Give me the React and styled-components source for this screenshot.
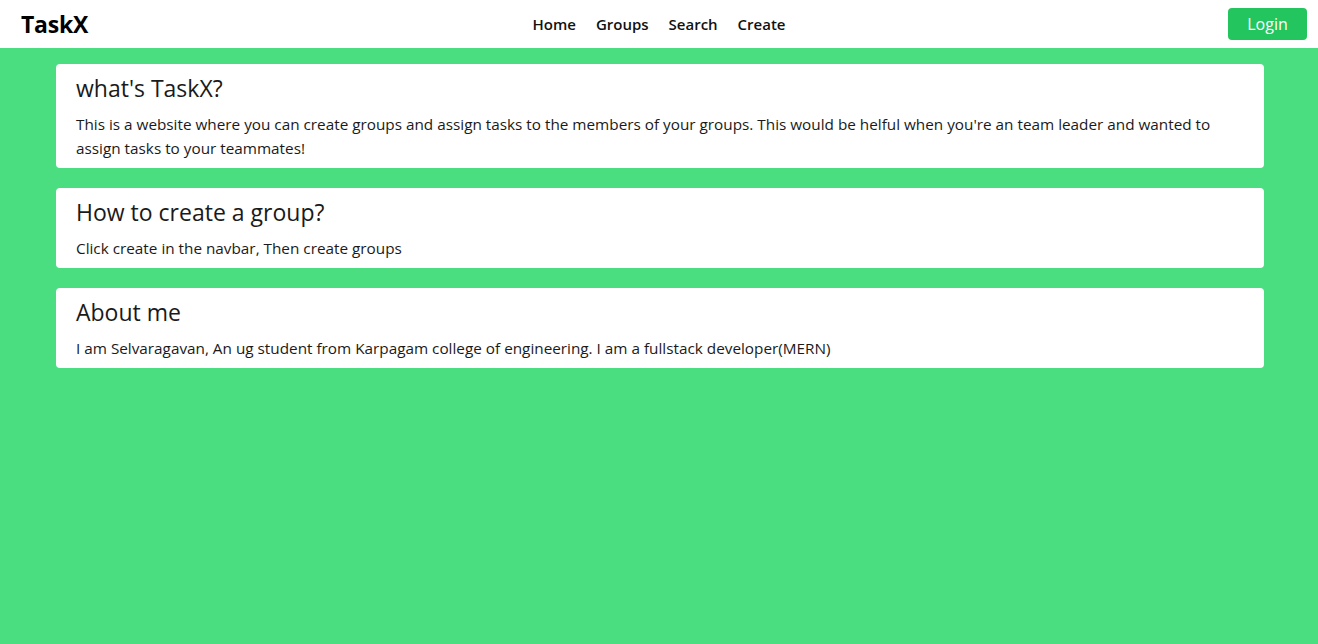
import React from "react";
import styled, { createGlobalStyle } from "styled-components";

const GlobalStyle = createGlobalStyle`
  html, body {
    margin: 0;
    padding: 0;
    height: 100%;
    background: #ffffff;
  }
  body {
    font-family: "Open Sans", "Noto Sans", sans-serif;
    color: #1a1a1a;
  }
  #root {
    height: 100%;
  }
  * {
    box-sizing: border-box;
  }
`;

const Page = styled.div`
  min-height: 100vh;
  background: #4ade80;
  display: flex;
  flex-direction: column;
`;

const Navbar = styled.nav`
  height: 48px;
  background: #ffffff;
  display: grid;
  grid-template-columns: 1fr auto 1fr;
  align-items: center;
  padding: 0 11px;
`;

const Brand = styled.div`
  margin-left: 10px;
  font-size: 23px;
  font-weight: 700;
  color: #000;
  letter-spacing: -0.2px;
`;

const NavLinks = styled.ul`
  display: flex;
  gap: 20px;
  list-style: none;
  margin: 0;
  padding: 0;
`;

const NavLink = styled.li`
  font-size: 15px;
  font-weight: 600;
  color: #111;
  cursor: pointer;
`;

const Right = styled.div`
  display: flex;
  justify-content: flex-end;
`;

const LoginButton = styled.button`
  width: 79px;
  height: 32px;
  border: none;
  border-radius: 4px;
  background: #22c55e;
  color: #ffffff;
  font-family: inherit;
  font-size: 16px;
  cursor: pointer;
`;

const Content = styled.main`
  display: flex;
  flex-direction: column;
  gap: 20px;
  padding: 16px 54px 16px 56px;
`;

const Card = styled.section`
  background: #ffffff;
  border-radius: 4px;
  padding: 8px 20px;
  display: flex;
  flex-direction: column;
  gap: 8px;
`;

const CardTitle = styled.h2`
  margin: 0;
  font-size: 23px;
  font-weight: 400;
  line-height: 32px;
  color: #1a1a1a;
`;

const CardText = styled.p`
  margin: 0;
  font-size: 15.3px;
  line-height: 24px;
  color: #1a1a1a;
`;

const cards = [
  {
    title: "what's TaskX?",
    text: "This is a website where you can create groups and assign tasks to the members of your groups. This would be helful when you're an team leader and wanted to assign tasks to your teammates!",
  },
  {
    title: "How to create a group?",
    text: "Click create in the navbar, Then create groups",
  },
  {
    title: "About me",
    text: "I am Selvaragavan, An ug student from Karpagam college of engineering. I am a fullstack developer(MERN)",
  },
];

const App = () => {
  return (
    <>
      <GlobalStyle />
      <Page>
        <Navbar>
          <Brand>TaskX</Brand>
          <NavLinks>
            <NavLink>Home</NavLink>
            <NavLink>Groups</NavLink>
            <NavLink>Search</NavLink>
            <NavLink>Create</NavLink>
          </NavLinks>
          <Right>
            <LoginButton>Login</LoginButton>
          </Right>
        </Navbar>
        <Content>
          {cards.map((card) => (
            <Card key={card.title}>
              <CardTitle>{card.title}</CardTitle>
              <CardText>{card.text}</CardText>
            </Card>
          ))}
        </Content>
      </Page>
    </>
  );
};

export default App;
